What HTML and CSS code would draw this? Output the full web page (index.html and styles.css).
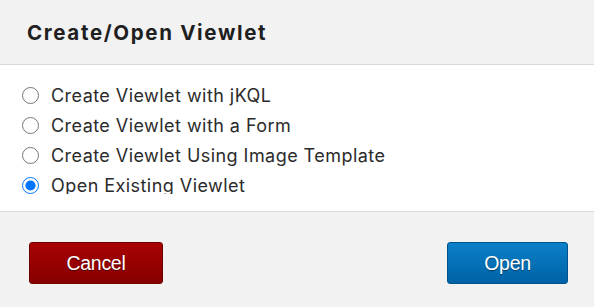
FILE: index.html
```html
<!DOCTYPE html>
<html>
<head>
<meta charset="utf-8">
<link rel="stylesheet" href="styles.css">
</head>
<body>
<div class="dialog">
  <div class="dialog-header">
    <h1 class="dialog-title">Create/Open Viewlet</h1>
  </div>
  <div class="dialog-body">
    <div class="option-list">
      <label class="option"><input type="radio" name="mode" class="option-radio"><span>Create Viewlet with jKQL</span></label>
      <label class="option"><input type="radio" name="mode" class="option-radio"><span>Create Viewlet with a Form</span></label>
      <label class="option"><input type="radio" name="mode" class="option-radio"><span>Create Viewlet Using Image Template</span></label>
      <label class="option"><input type="radio" name="mode" class="option-radio" checked><span>Open Existing Viewlet</span></label>
    </div>
  </div>
  <div class="dialog-footer">
    <button class="btn btn-cancel">Cancel</button>
    <button class="btn btn-open">Open</button>
  </div>
</div>
</body>
</html>
```
FILE: styles.css
```css
html, body {
  margin: 0;
  padding: 0;
}
body {
  width: 594px;
  height: 307px;
  overflow: hidden;
  background: #f2f2f2;
  font-family: Inter, "Noto Sans", sans-serif;
}
.dialog {
  display: flex;
  flex-direction: column;
  height: 307px;
}
.dialog-header {
  height: 64px;
  background: #f2f2f2;
  border-bottom: 1px solid #d9d9d9;
  display: flex;
  align-items: center;
  padding-left: 27px;
  box-sizing: content-box;
}
.dialog-title {
  margin: 0;
  font-size: 20.5px;
  letter-spacing: 1.65px;
  font-weight: 700;
  color: #1f1f1f;
  padding-top: 1px;
}
.dialog-body {
  background: #fff;
  height: 147px;
  border-bottom: 1px solid #d9d9d9;
  padding-top: 15px;
  box-sizing: border-box;
}
.option-list {
  height: 114px;
  overflow: hidden;
  display: flex;
  flex-direction: column;
}
.option {
  display: flex;
  align-items: center;
  height: 30px;
  flex: none;
  font-size: 18px;
  letter-spacing: 0.45px;
  color: #2b2b2b;
  padding-left: 22px;
}
.option-radio {
  width: 17px;
  height: 17px;
  margin: 0 12px 0 0;
  flex: none;
}
.dialog-footer {
  flex: 1;
  display: flex;
  justify-content: space-between;
  align-items: flex-start;
  padding: 30px 26px 0 29px;
}
.btn {
  height: 42px;
  border-radius: 3px;
  font-family: "Liberation Sans", Arial, sans-serif;
  font-size: 19.5px;
  letter-spacing: -0.3px;
  color: #fff;
  text-shadow: 0 1px 1px rgba(0,0,0,0.45);
  padding: 0;
  cursor: pointer;
}
.btn-cancel {
  width: 134px;
  background: linear-gradient(#a80202, #870000);
  border: 1px solid #6e0000;
}
.btn-open {
  width: 121px;
  background: linear-gradient(#0a80c8, #0062a6);
  border: 1px solid #00528c;
}
```
